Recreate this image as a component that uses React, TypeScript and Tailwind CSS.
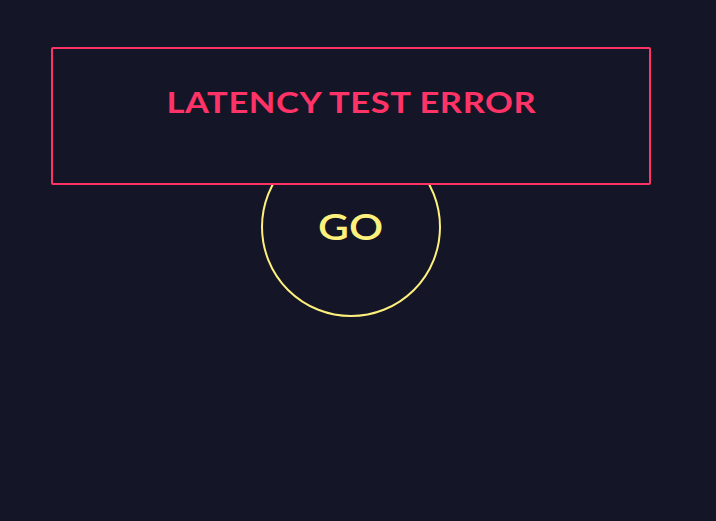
export default function App() {
  return (
    <div className="w-[716px] h-[521px] bg-[#141527] overflow-hidden">
      <div className="ml-[51px] w-[600px] pt-[47px] flex flex-col items-center">
        <div className="relative z-10 w-[600px] h-[138px] border-2 border-[#ff3366] rounded-[2px] bg-[#141527] flex justify-center pt-[37px]">
          <span
            className="inline-block scale-x-[1.19] text-[#ff3366] text-[29px] font-bold tracking-[0.5px] leading-[32px]"
            style={{ fontFamily: "Lato, 'Noto Sans', sans-serif" }}
          >
            LATENCY TEST ERROR
          </span>
        </div>
        <div className="relative z-0 -mt-[48px] w-[180px] h-[180px] rounded-full border-[2.5px] border-[#fdf07c] flex items-center justify-center">
          <span
            className="inline-block scale-x-[1.18] text-[#fdf07c] text-[36px] font-semibold leading-none -mt-[3px]"
            style={{ fontFamily: "Lato, 'Noto Sans', sans-serif" }}
          >
            GO
          </span>
        </div>
      </div>
    </div>
  );
}
